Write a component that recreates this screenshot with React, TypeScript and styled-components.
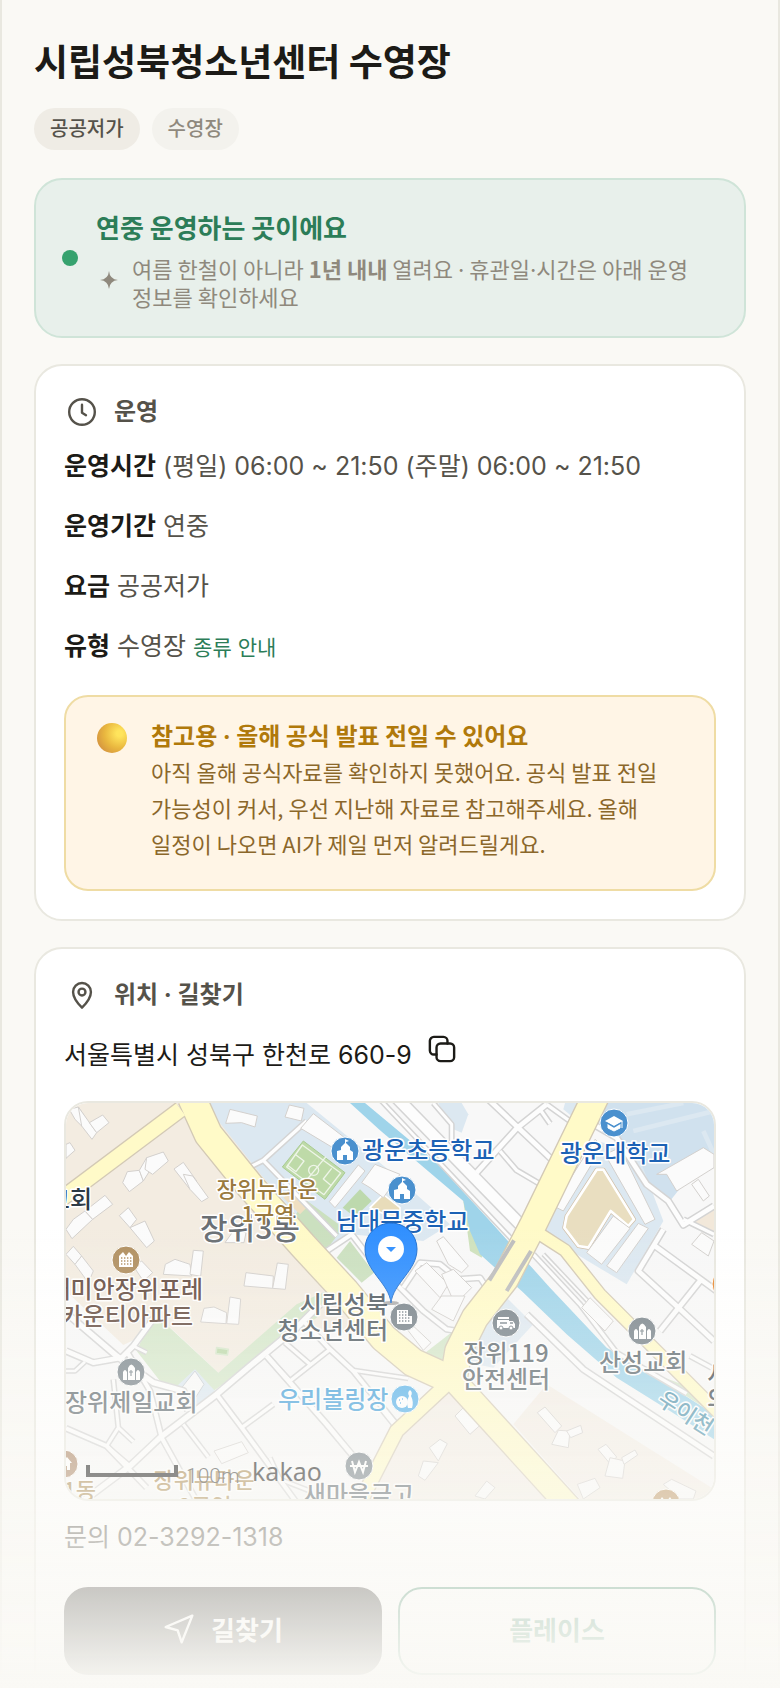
import type { ReactNode } from "react";
import styled, { createGlobalStyle } from "styled-components";

const GlobalStyle = createGlobalStyle`
  * {
    box-sizing: border-box;
  }
  body {
    margin: 0;
    background-color: #faf9f5;
    color: #1c1b17;
    font-family: "Noto Sans CJK KR", sans-serif;
    word-break: keep-all;
  }
  h1, h2, p {
    margin: 0;
  }
`;

const houses = [
  "M58 55L85 48L110 85L95 105L75 85Z",
  "M85 48L140 125L126 145L95 105Z",
  "M118 95L158 72L177 95L140 125Z",
  "M48 160L60 155L75 178L48 202Z",
  "M218 275L232 242L268 238L280 270L238 302Z",
  "M268 238L290 200L308 225L280 270Z",
  "M290 200L340 183L355 210L308 250L285 235Z",
  "M372 234L400 214L440 270L420 295Z",
  "M400 250L428 255L475 320L455 332L420 295Z",
  "M48 415L70 385L105 360L128 385L66 443Z",
  "M105 360L165 313L188 340L128 385Z",
  "M208 374L235 350L260 385L240 410Z",
  "M240 410L285 390L313 450L290 470Z",
  "M340 550L346 520L375 505L420 520L425 555Z",
  "M420 550L430 478L460 480L452 556Z",
  "M48 490L70 466L95 495L75 520Z",
  "M75 520L95 495L130 540L115 575Z",
  "M582 585L588 545L670 555L668 592Z",
  "M668 592L682 516L715 520L706 595Z",
  "M250 525L275 510L308 545L280 570Z",
  "M525 455L550 420L588 425L582 455Z",
  "M452 693L462 652L492 648L530 665L528 698Z",
  "M530 698L540 618L572 624L566 700Z",
  "M492 1080L575 1052L595 1085L515 1118Z",
  "M527 97L540 55L622 75L615 108L575 95Z",
  "M705 78L718 42L762 52L754 90Z",
  "M752 112L790 68L910 160L890 195Z",
  "M838 332L925 222L945 240L855 350Z",
  "M935 275L975 220L1050 250L1000 320L960 290Z",
  "M1510 345L1635 145L1658 165L1540 360Z",
  "M1665 190L1710 170L1815 385L1785 400Z",
  "M1610 485L1690 375L1740 412L1655 520Z",
  "M1670 525L1765 397L1795 412L1700 545Z",
  "M1820 250L1960 170L1992 190L1992 230L1880 300L1850 250Z",
  "M1925 280L1945 265L1978 315L1960 330Z",
  "M1925 460L1955 425L1992 450L1975 495Z",
  "M1160 450L1180 437L1255 525L1235 545L1195 520Z",
  "M1095 540L1130 515L1195 580L1170 620Z",
  "M1175 550L1210 535L1265 590L1215 640Z",
  "M1145 655L1175 615L1245 615L1210 690Z",
  "M1060 700L1090 705L1143 755L1120 778Z",
  "M1595 650L1620 620L1690 690L1665 720Z",
  "M1462 965L1485 948L1535 1005L1515 1025Z",
  "M1505 1060L1525 1018L1560 1020L1555 1070Z",
  "M1550 1020L1592 1003L1598 1025L1562 1040Z",
  "M1644 1075L1668 1060L1700 1098L1680 1118Z",
  "M1665 1155L1680 1100L1725 1110L1718 1162Z",
  "M1715 1100L1755 1077L1763 1092L1722 1120Z",
  "M1138 1070L1170 1045L1192 1058L1165 1110Z",
  "M1105 1155L1120 1110L1165 1115L1125 1168Z",
  "M1275 1215L1310 1170L1335 1190L1305 1224Z",
  "M1582 1180L1635 1162L1650 1190L1600 1224Z",
  "M1840 1180L1865 1165L1938 1200L1930 1224L1890 1224Z",
  "M1215 975L1255 935L1310 985L1260 1030Z",
];

const streets: [string, number][] = [
  ["M1040 20L1425 415", 32],
  ["M985 20L1395 455", 8],
  ["M1150 36L1205 100V150", 9],
  ["M1280 245L1400 112L1490 40", 14],
  ["M1310 20L1510 210", 14],
  ["M1470 55L1500 98M1490 40L1580 105", 10],
  ["M1350 180L1400 238L1480 285", 10],
  ["M1630 100L1700 140L1790 280L1855 330L1900 402L1992 345", 14],
  ["M1900 385L1992 430", 10],
  ["M1840 415L1765 540L1880 645L1992 750", 14],
  ["M1815 465L2000 600M1950 570L1830 720", 14],
  ["M1430 670L1600 835L1750 935L1992 1095", 14],
  ["M1450 490L1590 640L1700 785L1910 908", 10],
  ["M1480 490L1660 680", 6],
  ["M1060 590L1110 515L1170 520L1225 565L1290 560L1310 590", 12],
  ["M1040 580L1120 660L1190 715L1235 722", 12],
  ["M770 90L640 208L600 228M640 208L860 435", 10],
  ["M830 480L905 430L990 540", 12],
  ["M48 665L200 795L310 875L400 900L415 960", 16],
  ["M48 780L130 815L215 800L250 765L320 670", 14],
  ["M48 840L75 840L105 812M250 765L290 785", 8],
  ["M100 1230L240 1125L330 1040L500 910L600 825L740 710L810 640", 16],
  ["M48 1012L170 1065L290 1190", 12],
  ["M190 865L205 1010L250 1052M205 1010L170 1065L240 1125", 9],
  ["M230 780L300 900L335 1040L440 1230", 12],
  ["M400 1000L475 1098", 9],
  ["M500 910L575 1010L740 1235", 12],
  ["M575 1010L670 940", 10],
  ["M650 795L830 1000L980 1180", 14],
  ["M650 795L720 870L840 775M705 755L780 820", 10],
  ["M760 690L840 775L910 840L1035 995", 12],
  ["M910 838L1075 862", 8],
  ["M990 950L1030 1000L1025 1050", 8],
  ["M660 1100L690 1165L780 1200", 8],
  ["M1920 795L1985 830", 10],
];

const yellowRoads: [string, number][] = [
  ["M392 55L36 322", 44],
  ["M425 20L475 130L600 285L760 465L885 600L1000 740L1090 815L1200 865", 82],
  ["M1640 10L1450 400L1365 565L1275 680L1225 780L1210 870", 78],
  ["M1205 860L1560 1250", 68],
  ["M1190 880L1040 1020L930 1235", 40],
  ["M1455 420L1545 478L1650 610L2010 970", 34],
];

const labels: {
  text: string;
  x: number;
  y: number;
  color: string;
  size?: number;
  anchor?: "start" | "middle" | "end";
}[] = [
  { text: "장위3동", x: 150, y: 148, color: "#6a6f74", size: 30 },
  { text: "장위뉴타운", x: 217, y: 106, color: "#9a7a3f", size: 22, anchor: "middle" },
  { text: "1구역", x: 218, y: 131, color: "#9a7a3f", size: 22, anchor: "middle" },
  { text: "광운초등학교", x: 312, y: 68, color: "#1c62b5" },
  { text: "남대문중학교", x: 286, y: 139, color: "#1c62b5" },
  { text: "광운대학교", x: 510, y: 71, color: "#1c62b5" },
  { text: "교회", x: 42, y: 117, color: "#2d3a45", anchor: "end" },
  { text: "래미안장위포레", x: 153, y: 207, color: "#634a3f", anchor: "end" },
  { text: "카운티아파트", x: 143, y: 234, color: "#634a3f", anchor: "end" },
  { text: "시립성북", x: 338, y: 222, color: "#4f5a61", anchor: "end" },
  { text: "청소년센터", x: 338, y: 248, color: "#4f5a61", anchor: "end" },
  { text: "장위119", x: 456, y: 271, color: "#5d686e", anchor: "middle" },
  { text: "안전센터", x: 456, y: 297, color: "#5d686e", anchor: "middle" },
  { text: "산성교회", x: 549, y: 280, color: "#5d686e" },
  { text: "장위제일교회", x: 15, y: 320, color: "#5d686e" },
  { text: "우리볼링장", x: 228, y: 317, color: "#419fda" },
  { text: "장위뉴타운", x: 154, y: 397, color: "#a58346", size: 22, anchor: "middle" },
  { text: "2구역", x: 155, y: 423, color: "#a58346", size: 22, anchor: "middle" },
  { text: "장위1동", x: 46, y: 407, color: "#a58346", size: 22, anchor: "end" },
  { text: "새마을금고", x: 309, y: 412, color: "#4f5a61", anchor: "middle" },
  { text: "서", x: 657, y: 292, color: "#3d474d" },
  { text: "의", x: 657, y: 317, color: "#3d474d" },
];

const School = () => (
  <path d="M-8 9V0L-4 -1V-4L0 -8V-12L4 -10L1 -9V-8L5 -4V-1L8 1V9H2V4H-2V9Z" fill="#fff" />
);

const Church = () => (
  <>
    <path
      d="M-8 8V0Q-6 -4 -4 0V8ZM-3 8V-4Q0 -11 4 -4V8ZM5 8V0Q7 -4 9 0V8Z"
      fill="#fff"
    />
    <path d="M0 -2V4M-2 0H2" stroke="#7b868c" strokeWidth="1.2" />
  </>
);

const pois: { x: number; y: number; color: string; icon?: ReactNode }[] = [
  { x: 295, y: 60, color: "#4a90ce", icon: <School /> },
  { x: 352, y: 99, color: "#4a90ce", icon: <School /> },
  {
    x: 564,
    y: 32,
    color: "#4a90ce",
    icon: (
      <>
        <path d="M0 -7L9 -2L0 3L-9 -2Z" fill="#fff" />
        <path d="M-6 1V5L0 8L6 5V1L0 5ZM8 -2V5" fill="#fff" stroke="#fff" />
        <path d="M-7 0L0 4L7 0" fill="none" stroke="#4a90ce" strokeWidth="1.4" />
      </>
    ),
  },
  {
    x: 76,
    y: 169,
    color: "#b08f60",
    icon: (
      <>
        <path d="M-7 7V-4L-3 -8L0 -4L3 -8L7 -4V7Z" fill="#fff" />
        <path d="M-5 -2H6M-5 1H6M-5 4H6" stroke="#b08f60" strokeWidth="1.4" strokeDasharray="1.4 1.6" />
      </>
    ),
  },
  {
    x: 354,
    y: 226,
    color: "#78838a",
    icon: (
      <>
        <path d="M-7 7V-7H4V-1H8V7Z" fill="#fff" />
        <path d="M-5 -5H3M-5 -2H3M-5 1H7M-5 4H7" stroke="#78838a" strokeWidth="1.4" strokeDasharray="1.4 1.6" />
      </>
    ),
  },
  {
    x: 456,
    y: 232,
    color: "#78838a",
    icon: (
      <>
        <path d="M-9 -3H3V-2H7L9 1V5H-9ZM-8 -6H3V-4H-8Z" fill="#fff" />
        <path d="M-6 0H1M4 0H7" stroke="#78838a" strokeWidth="1.4" />
        <circle cx="-5" cy="5" r="2" fill="#fff" stroke="#78838a" />
        <circle cx="5" cy="5" r="2" fill="#fff" stroke="#78838a" />
      </>
    ),
  },
  { x: 592, y: 240, color: "#78838a", icon: <Church /> },
  { x: 81, y: 281, color: "#78838a", icon: <Church /> },
  {
    x: 355,
    y: 308,
    color: "#54b0ea",
    icon: (
      <>
        <circle cx="-3" cy="3" r="6" fill="#fff" />
        <path d="M5 -9Q8 -7 6 -3Q9 3 7 9H3Q1 3 4 -3Q2 -7 5 -9Z" fill="#fff" />
        <path d="M-6 1H-5M-3 0H-2M-5 4H-4" stroke="#54b0ea" strokeWidth="1.6" />
      </>
    ),
  },
  {
    x: 309,
    y: 375,
    color: "#6d7980",
    icon: <path d="M-7 -5L-4 6L0 -4L4 6L7 -5M-9 0H9" fill="none" stroke="#fff" strokeWidth="2" />,
  },
  {
    x: 14,
    y: 373,
    color: "#a8805f",
    icon: <path d="M-5 0L3 -7L8 -1H6V6H3V2H0V6H-5Z" fill="#fff" />,
  },
  {
    x: 616,
    y: 412,
    color: "#b98e58",
    icon: <path d="M-8 0L-4 -6L0 -1L4 -6L8 0Z" fill="#fff" />,
  },
  { x: 676, y: 193, color: "#e8862e" },
];

function NeighborhoodMap() {
  return (
    <MapSvg
      viewBox="16 12 648 396"
      preserveAspectRatio="xMidYMid slice"
      role="img"
      aria-label="시립성북청소년센터 지도"
    >
      <rect x="16" y="12" width="648" height="396" fill="#f8f8f8" />
      <g transform="scale(0.333333)" strokeLinejoin="round">
        {/* land areas */}
        <path
          d="M48 36H480L1000 740L700 700L505 845L420 765L350 700L220 762L48 600Z"
          fill="#f3ece1"
        />
        <path
          d="M478 36H770L1020 240L1200 400L1120 450L900 430L830 475L640 260L505 90Z"
          fill="#dce8f1"
        />
        <path d="M1165 36H1235L1255 70L1235 125L1200 110Z" fill="#dce8f1" />
        <path d="M1545 36H1590L1570 80L1540 55Z" fill="#dce8f1" />
        <path
          d="M1650 36H1992V230L1900 280L1860 330L1800 280L1700 140L1640 90Z"
          fill="#d0e1ee"
        />
        <path
          d="M1730 70L1900 36M1750 120L1992 60M1960 120L1992 190"
          fill="none"
          stroke="#dce8f1"
          strokeWidth="14"
        />
        <path d="M1640 150L1760 180L1840 390L1730 580L1480 430L1520 330Z" fill="#dce8f1" />
        <path d="M1360 610L1450 700L1330 830L1230 810L1290 690Z" fill="#dfe9f1" />
        <path
          d="M300 690L345 697L505 845L740 640L830 600L800 680L490 900L380 890L330 870L260 780Z"
          fill="#d5e7ca"
        />
        <path d="M375 890L435 835L495 900L440 950Z" fill="#dce8f1" />
        <path d="M395 890L435 840L462 880L430 930Z" fill="#f9f9f9" stroke="#c8ced4" strokeWidth="3" />
        <path d="M500 770L535 775L532 792L498 788Z" fill="#bcd9a8" stroke="#d5e7ca" strokeWidth="5" />
        <path d="M1200 890L1510 1224H940L1070 1010Z" fill="#f4eee6" />
        <path d="M1490 880L1992 1195V1224H1590L1390 1000Z" fill="#f4eee6" />
        <path d="M1210 720L1195 815L1120 790Z" fill="#d5e7ca" />
        <path d="M765 325L880 410L830 475L735 375Z" fill="#cbe0bf" />
        <path d="M930 295L965 330L915 378L878 350Z" fill="#bdd9ad" />
        <path d="M900 450L972 545L935 575L860 500Z" fill="#cbe0bf" />
        <path d="M700 320L720 305L775 345L750 370Z" fill="#efdfc2" />
        <path d="M1000 310L1050 350V390L960 350Z" fill="#e8dcba" stroke="#fff" strokeWidth="5" />
        <path d="M1930 390L1992 345V430Z" fill="#f2e8da" />
        {/* 우이천 */}
        <path
          d="M1240 330L1262 345L1275 420L1305 470L1295 500L1260 480Z"
          fill="#cfe2bd"
        />
        <path
          d="M900 36H945L1160 215L1320 390L1500 590L1670 770L1790 840L1992 970V1045L1860 960L1700 860L1550 730L1415 600L1335 530L1290 490L1260 420L1240 330L990 118Z"
          fill="#9fd4ea"
        />
        <path d="M1790 840L1910 885L1992 945V968Z" fill="#d5e7ca" />
        {/* sports grounds */}
        <path d="M760 150L885 245L825 325L697 228Z" fill="#bedaa8" stroke="#a9cb92" strokeWidth="3" />
        <g fill="none" stroke="#eef5e8" strokeWidth="4">
          <path d="M757 162L872 246L822 311L710 228ZM828 197L755 285" />
          <circle cx="791" cy="238" r="15" />
          <path d="M735 190L762 210L738 242L712 222M845 232L820 264L844 284" />
        </g>
        <path
          d="M1640 236H1660L1752 385L1735 405L1682 360L1615 470L1585 465L1543 410L1550 375Z"
          fill="#e9dec0"
          stroke="#d1bfa7"
          strokeWidth="12"
        />
        <path
          d="M1640 236H1660L1752 385L1735 405L1682 360L1615 470L1585 465L1543 410L1550 375Z"
          fill="#e9dec0"
          stroke="#fff"
          strokeWidth="8"
        />
        {/* roads: casings first, then fills */}
        <g fill="none">
          {streets.map(([d, w]) => (
            <path key={d} d={d} stroke="#d4d4d4" strokeWidth={w + 9} />
          ))}
          {streets.map(([d, w]) => (
            <path key={d} d={d} stroke="#fdfdfd" strokeWidth={w} />
          ))}
        </g>
        {houses.map((d) => (
          <path key={d} d={d} fill="#fbfbfb" stroke="#d3d0cd" strokeWidth="3" />
        ))}
        <g fill="none">
          {yellowRoads.map(([d, w]) => (
            <path key={d} d={d} stroke="#d3c9b5" strokeWidth={w + 8} />
          ))}
          {yellowRoads.map(([d, w]) => (
            <path key={d} d={d} stroke="#fffac8" strokeWidth={w} />
          ))}
          <path d="M1392 448L1318 568M1443 480L1370 600" stroke="#bdbdbd" strokeWidth="12" />
        </g>
      </g>
      {pois.map((poi) => (
        <g key={`${poi.x}-${poi.y}`} transform={`translate(${poi.x} ${poi.y})`}>
          <circle r="14" fill={poi.color} stroke="#fff" strokeWidth="1" />
          {poi.icon}
        </g>
      ))}
      {labels.map((label) => (
        <MapLabel
          key={`${label.text}-${label.y}`}
          x={label.x}
          y={label.y}
          fill={label.color}
          fontSize={label.size ?? 24}
          textAnchor={label.anchor ?? "start"}
        >
          {label.text}
        </MapLabel>
      ))}
      <MapLabel transform="translate(606 312) rotate(33)" fill="#4e93ad" fontSize="22">
        우이천
      </MapLabel>
      <ellipse cx="341" cy="212" rx="8" ry="2" fill="#000" opacity="0.3" />
      <path
        d="M341 212C339 192 315 180 315 158A26 26 0 0 1 367 158C367 180 343 192 341 212Z"
        fill="#2f8fff"
        stroke="#1f6fd0"
      />
      <circle cx="341" cy="158" r="13" fill="#fff" />
      <path d="M336 156H346L341 161Z" fill="#2f8fff" />
      <path d="M38 374V384H126V374" fill="none" stroke="#111" strokeWidth="4" />
      <ScaleText x="136" y="392">
        100m
      </ScaleText>
      <BrandText x="202" y="390">
        kakao
      </BrandText>
    </MapSvg>
  );
}

const ClockIcon = () => (
  <Icon viewBox="0 0 24 24" strokeWidth="1.8">
    <circle cx="12" cy="12" r="9.6" />
    <path d="M12 6.500V12.500L15 14.400" />
  </Icon>
);

const PinIcon = () => (
  <Icon viewBox="0 0 24 24" strokeWidth="1.8">
    <path d="M12 21.500C9.500 19 5.300 14.500 5.300 9.700A6.700 6.700 0 0 1 18.700 9.700C18.700 14.500 14.500 19 12 21.500Z" />
    <circle cx="12" cy="9.800" r="2.600" />
  </Icon>
);

const CopyIcon = () => (
  <Icon viewBox="0 0 24 24" strokeWidth="1.8">
    <rect x="7.900" y="7.900" width="13.200" height="13.200" rx="3" />
    <path d="M7.900 16.100H5.900A3 3 0 0 1 2.900 13.100V5.900A3 3 0 0 1 5.900 2.900H13.100A3 3 0 0 1 16.100 5.900V7.900" />
  </Icon>
);

const SendIcon = () => (
  <Icon viewBox="0 0 24 24" strokeWidth="1.8">
    <path d="M22 2L2 10.500L11 13L14 22Z" />
  </Icon>
);

function App() {
  return (
    <>
      <GlobalStyle />
      <Shell>
        <PageTitle>시립성북청소년센터 수영장</PageTitle>
        <Tags>
          <Tag $strong>공공저가</Tag>
          <Tag>수영장</Tag>
        </Tags>

        <StatusBanner>
          <StatusDot />
          <div>
            <StatusTitle>연중 운영하는 곳이에요</StatusTitle>
            <StatusNote>
              <Sparkle viewBox="0 0 24 24">
                <path d="M12 0Q13 11 24 12Q13 13 12 24Q11 13 0 12Q11 11 12 0Z" />
              </Sparkle>
              <p>
                여름 한철이 아니라 <b>1년 내내</b> 열려요 <Dot>·</Dot> 휴관일<Dot>·</Dot>시간은
                아래 운영 정보를 확인하세요
              </p>
            </StatusNote>
          </div>
        </StatusBanner>

        <Card>
          <CardHeading>
            <ClockIcon />
            운영
          </CardHeading>
          <InfoList>
            <InfoRow>
              <b>운영시간</b> (평일) 06:00 ~ 21:50 (주말) 06:00 ~ 21:50
            </InfoRow>
            <InfoRow>
              <b>운영기간</b> 연중
            </InfoRow>
            <InfoRow>
              <b>요금</b> 공공저가
            </InfoRow>
            <InfoRow>
              <b>유형</b> 수영장 <GuideLink href="#types">종류 안내</GuideLink>
            </InfoRow>
          </InfoList>
          <Notice>
            <Ball />
            <div>
              <NoticeTitle>
                참고용 <Dot>·</Dot> 올해 공식 발표 전일 수 있어요
              </NoticeTitle>
              <NoticeText>
                아직 올해 공식자료를 확인하지 못했어요. 공식 발표 전일 가능성이 커서, 우선
                지난해 자료로 참고해주세요. 올해 일정이 나오면 AI가 제일 먼저 알려드릴게요.
              </NoticeText>
            </div>
          </Notice>
        </Card>

        <Card>
          <CardHeading>
            <PinIcon />
            위치 · 길찾기
          </CardHeading>
          <Address>
            서울특별시 성북구 한천로 660-9
            <CopyButton type="button" aria-label="주소 복사">
              <CopyIcon />
            </CopyButton>
          </Address>
          <MapFrame>
            <NeighborhoodMap />
          </MapFrame>
          <Contact>문의 02-3292-1318</Contact>
          <Actions>
            <ActionButton type="button" $filled>
              <SendIcon />
              길찾기
            </ActionButton>
            <ActionButton type="button">플레이스</ActionButton>
          </Actions>
        </Card>
        <BottomFade />
      </Shell>
    </>
  );
}

export default App;

const Shell = styled.main`
  height: 100vh;
  overflow: hidden;
  padding: 34px 32px 0;
  border: solid #e9e8e0;
  border-width: 0 2px;
`;

const PageTitle = styled.h1`
  font-size: 37px;
  line-height: 52px;
  font-weight: 700;
`;

const Tags = styled.div`
  display: flex;
  gap: 12px;
  margin-top: 22px;
`;

const Tag = styled.span<{ $strong?: boolean }>`
  padding: 0 16px 2px;
  border-radius: 21px;
  font-size: 20px;
  line-height: 40px;
  font-weight: 500;
  color: ${(props) => (props.$strong ? "#55524a" : "#8f897d")};
  background-color: ${(props) => (props.$strong ? "#efece5" : "#f3f2ed")};
`;

/* Inter's middle dot is narrower than the CJK one */
const Dot = styled.span`
  font-family: Inter, sans-serif;
  line-height: 1;
`;

const StatusBanner = styled.section`
  display: flex;
  align-items: center;
  gap: 18px;
  margin-top: 28px;
  padding: 26px;
  border: 2px solid #cfe4d8;
  border-radius: 28px;
  background-color: #e8f0eb;
`;

const StatusDot = styled.span`
  flex: none;
  width: 16px;
  height: 16px;
  border-radius: 50%;
  background-color: #36a26e;
`;

const StatusTitle = styled.h2`
  font-size: 26px;
  line-height: 42px;
  font-weight: 700;
  color: #2c7d58;
`;

const StatusNote = styled.div`
  display: flex;
  align-items: center;
  gap: 14px;
  padding: 6px 20px 0 4px;
  font-size: 22px;
  line-height: 28px;
  color: #8f897d;
`;

const Sparkle = styled.svg`
  flex: none;
  width: 18px;
  height: 18px;
  margin-bottom: 4px;
  fill: currentColor;
`;

const Card = styled.section`
  margin-top: 26px;
  padding: 28px;
  border: 2px solid #e9e8e0;
  border-radius: 28px;
  background-color: #fff;
`;

const Icon = styled.svg`
  flex: none;
  width: 32px;
  height: 32px;
  fill: none;
  stroke: currentColor;
  stroke-linecap: round;
  stroke-linejoin: round;
`;

const CardHeading = styled.h2`
  display: flex;
  align-items: center;
  gap: 16px;
  padding-left: 2px;
  font-family: Inter, "Noto Sans CJK KR", sans-serif;
  font-size: 24px;
  line-height: 36px;
  font-weight: 700;
  color: #55524a;
`;

const InfoList = styled.div`
  display: flex;
  flex-direction: column;
  gap: 20px;
  margin-top: 16px;
`;

const InfoRow = styled.p`
  font-family: Inter, "Noto Sans CJK KR", sans-serif;
  font-size: 25px;
  line-height: 40px;
  color: #55524a;

  b {
    color: #1c1b17;
  }
`;

const GuideLink = styled.a`
  font-size: 21px;
  color: #2c7d58;
  text-decoration: none;
`;

const Notice = styled.aside`
  display: flex;
  gap: 24px;
  margin-top: 27px;
  padding: 20px 48px 24px 31px;
  border: 2px solid #efdca4;
  border-radius: 24px;
  background-color: #fff5e6;
`;

const Ball = styled.span`
  flex: none;
  width: 30px;
  height: 30px;
  margin-top: 6px;
  border-radius: 50%;
  background: radial-gradient(circle at 75% 35%, #ffe45c 10%, #e9b73f 50%, #d6963f 80%, #d9806a);
`;

const NoticeTitle = styled.h2`
  font-size: 24px;
  line-height: 36px;
  font-weight: 700;
  color: #b0790b;
`;

const NoticeText = styled.p`
  padding-bottom: 4px;
  font-size: 22px;
  line-height: 36px;
  color: #8b672a;
`;

const Address = styled.div`
  display: flex;
  align-items: center;
  gap: 14px;
  margin-top: 20px;
  font-family: Inter, "Noto Sans CJK KR", sans-serif;
  font-size: 25px;
  line-height: 44px;
`;

const CopyButton = styled.button`
  display: flex;
  padding: 0 0 12px;
  border: 0;
  background: none;
  color: inherit;
  cursor: pointer;
`;

const MapFrame = styled.div`
  margin-top: 24px;
  overflow: hidden;
  border: 2px solid #e9e8e0;
  border-radius: 24px;
`;

const MapSvg = styled.svg`
  display: block;
  width: 100%;
  height: 396px;
`;

const MapLabel = styled.text`
  font-family: "Noto Sans CJK KR", sans-serif;
  font-weight: 500;
  stroke: #fff;
  stroke-width: 3px;
  stroke-linejoin: round;
  paint-order: stroke;
`;

const ScaleText = styled.text`
  font-family: Roboto, sans-serif;
  font-size: 21px;
  font-weight: 300;
  fill: #333;
`;

const BrandText = styled.text`
  font-family: "Noto Sans", sans-serif;
  font-size: 25px;
  fill: #111;
`;

const Contact = styled.p`
  margin-top: 16px;
  font-family: Inter, "Noto Sans CJK KR", sans-serif;
  font-size: 25px;
  line-height: 40px;
  color: #55524a;
`;

const Actions = styled.div`
  display: flex;
  gap: 16px;
  margin-top: 30px;
`;

const ActionButton = styled.button<{ $filled?: boolean }>`
  display: flex;
  flex: 1;
  align-items: center;
  justify-content: center;
  gap: 16px;
  height: 88px;
  padding-bottom: 6px;
  border: 2px solid ${(props) => (props.$filled ? "#1c1b17" : "#2c7d58")};
  border-radius: 24px;
  font-family: inherit;
  font-size: 26px;
  font-weight: 700;
  color: ${(props) => (props.$filled ? "#fff" : "#2c7d58")};
  background-color: ${(props) => (props.$filled ? "#1c1b17" : "#fff")};
  cursor: pointer;
`;

const BottomFade = styled.div`
  position: fixed;
  right: 0;
  bottom: 0;
  left: 0;
  height: 464px;
  background: linear-gradient(rgba(250, 249, 245, 0), #faf9f5);
  pointer-events: none;
`;
